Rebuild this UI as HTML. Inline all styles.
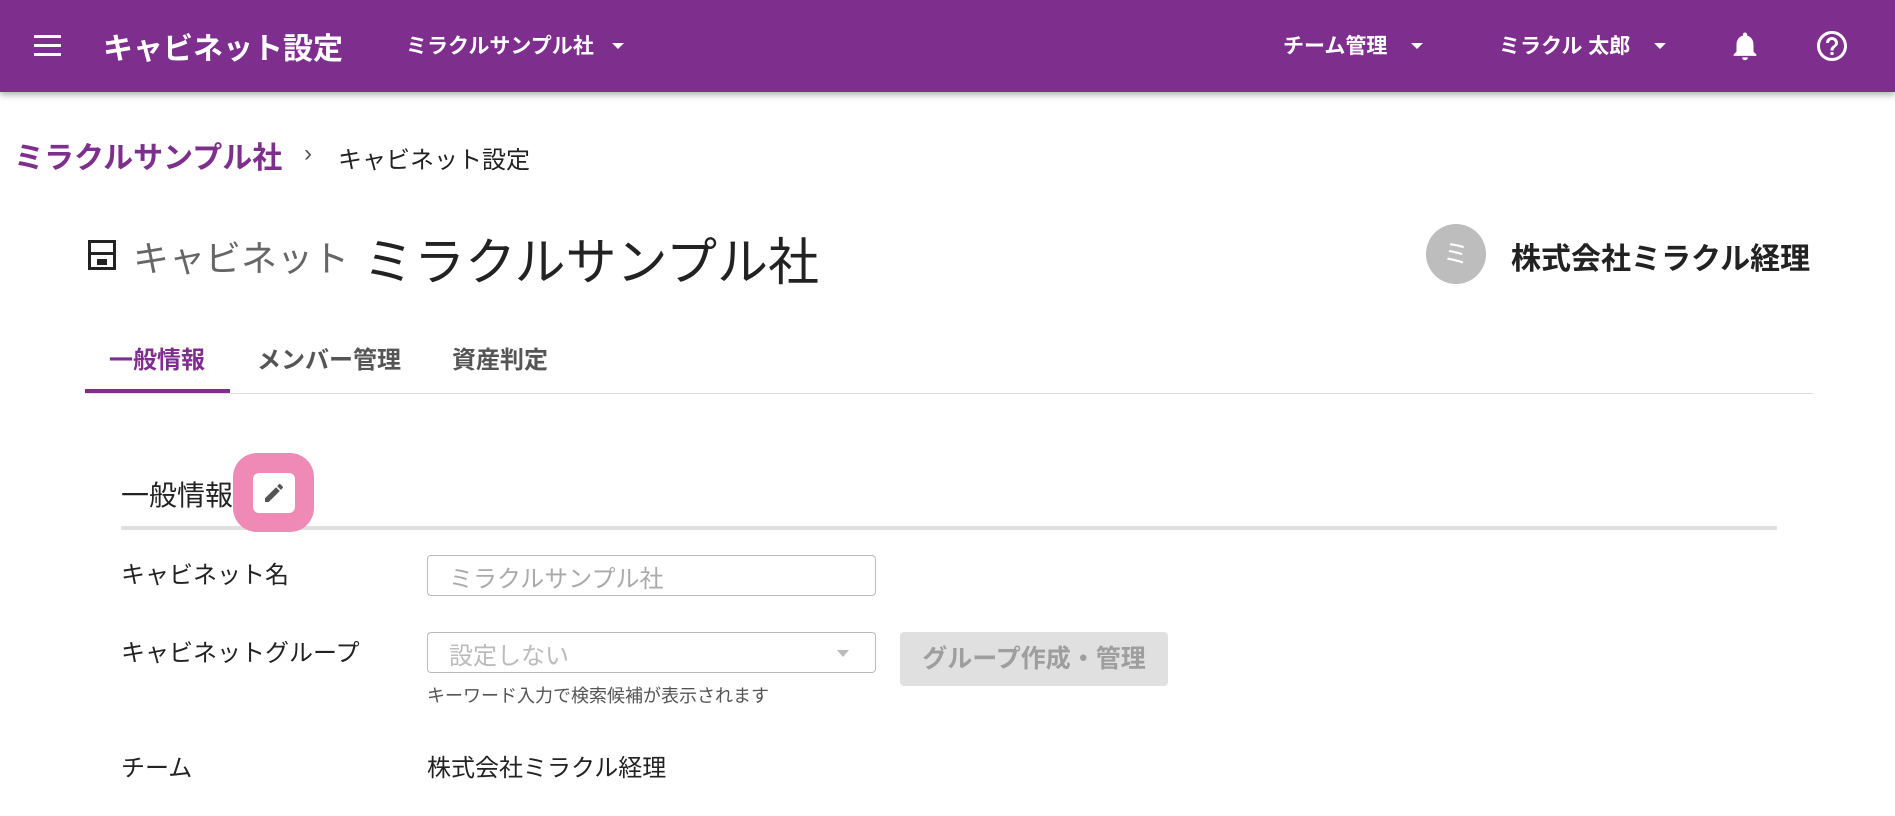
<!DOCTYPE html>
<html><head><meta charset="utf-8"><style>
*{margin:0;padding:0;box-sizing:border-box}
body{width:1895px;height:816px;overflow:hidden;background:#fff;font-family:"Liberation Sans","Noto Sans CJK JP",sans-serif;color:#222;position:relative}
.a{position:absolute;white-space:nowrap}
.hdr{position:absolute;left:0;top:0;width:1895px;height:92px;background:#7e2f8e;box-shadow:0 3px 6px rgba(0,0,0,.3)}
.w{color:#fff;font-weight:bold}
.car{width:0;height:0;border-left:6px solid transparent;border-right:6px solid transparent;border-top:6px solid #fff}
</style></head><body>
<div class="hdr">
<div class="a" style="left:34px;top:35px;width:27px;height:3px;background:#fff;box-shadow:0 9px 0 #fff,0 18px 0 #fff"></div>
<div class="a w" style="left:103px;top:24px;font-size:30px">キャビネット設定</div>
<div class="a w" style="left:406px;top:30px;font-size:21px">ミラクルサンプル社</div>
<div class="a car" style="left:612px;top:43px"></div>
<div class="a w" style="left:1283px;top:30px;font-size:21px">チーム管理</div>
<div class="a car" style="left:1411px;top:43px"></div>
<div class="a w" style="left:1499px;top:30px;font-size:21px">ミラクル 太郎</div>
<div class="a car" style="left:1654px;top:43px"></div>
<svg class="a" style="left:1728px;top:27px" width="34" height="38" viewBox="0 0 24 24"><path fill="#fff" d="M12 22c1.1 0 2-.9 2-2h-4c0 1.1.9 2 2 2zm6-6v-5c0-3.07-1.63-5.64-4.5-6.32V4c0-.83-.67-1.5-1.5-1.5s-1.5.67-1.5 1.5v.68C7.64 5.360 6 7.92 6 11v5l-2 2v1h16v-1l-2-2z"/></svg>
<svg class="a" style="left:1814px;top:28px" width="36" height="36" viewBox="0 0 24 24"><path fill="#fff" d="M11 18h2v-2h-2v2zm1-16C6.48 2 2 6.48 2 12s4.48 10 10 10 10-4.48 10-10S17.52 2 12 2zm0 18c-4.41 0-8-3.59-8-8s3.59-8 8-8 8 3.59 8 8-3.59 8-8 8zm0-14c-2.21 0-4 1.790-4 4h2c0-1.1.9-2 2-2s2 .9 2 2c0 2-3 1.75-3 5h2c0-2.25 3-2.5 3-5 0-2.21-1.79-4-4-4z"/></svg>
</div>
<div class="a" style="left:14px;top:133px;font-size:30px;font-weight:bold;color:#7e2f8e">ミラクルサンプル社</div>
<div class="a" style="left:304px;top:140px;font-size:24px;color:#555">›</div>
<div class="a" style="left:338px;top:140px;font-size:24px;color:#222">キャビネット設定</div>
<svg class="a" style="left:88px;top:240px" width="28" height="30" viewBox="0 0 28 30"><rect x="1.5" y="1.5" width="25" height="27" fill="none" stroke="#222" stroke-width="3"/><rect x="1" y="12" width="26" height="3" fill="#222"/><rect x="9" y="19" width="10" height="6" fill="#222"/></svg>
<div class="a" style="left:133px;top:230px;font-size:36px;color:#666">キャビネット</div>
<div class="a" style="left:363px;top:221px;font-size:51px;color:#222">ミラクルサンプル社</div>
<div class="a" style="left:1426px;top:224px;width:60px;height:60px;border-radius:50%;background:#bdbdbd;color:#fff;font-size:26px;text-align:center;line-height:60px">ミ</div>
<div class="a" style="left:1511px;top:234px;font-size:30px;font-weight:bold;color:#222">株式会社ミラクル経理</div>
<div class="a" style="left:109px;top:340px;font-size:24px;font-weight:bold;color:#7e2f8e">一般情報</div>
<div class="a" style="left:257px;top:340px;font-size:24px;font-weight:bold;color:#555">メンバー管理</div>
<div class="a" style="left:452px;top:340px;font-size:24px;font-weight:bold;color:#555">資産判定</div>
<div class="a" style="left:85px;top:393px;width:1728px;height:1px;background:#ddd"></div>
<div class="a" style="left:85px;top:389px;width:145px;height:4px;background:#7e2f8e"></div>
<div class="a" style="left:121px;top:474px;font-size:28px;color:#222">一般情報</div>
<div class="a" style="left:121px;top:526px;width:1656px;height:4px;background:#e0e0e0"></div>
<div class="a" style="left:233px;top:453px;width:81px;height:79px;border-radius:24px;background:#ef8ab6"></div>
<div class="a" style="left:253px;top:473px;width:42px;height:40px;border-radius:6px;background:#fff"></div>
<svg class="a" style="left:262px;top:481px" width="24" height="24" viewBox="0 0 24 24"><path fill="#555" d="M3 17.25V21h3.75L17.81 9.94l-3.75-3.75L3 17.25zM20.71 7.04c.39-.39.39-1.02 0-1.41l-2.34-2.34a.9959.9959 0 0 0-1.41 0l-1.83 1.83 3.75 3.75 1.83-1.830z"/></svg>
<div class="a" style="left:121px;top:555px;font-size:24px">キャビネット名</div>
<div class="a" style="left:427px;top:555px;width:449px;height:41px;border:1px solid #bbb;border-radius:4px"></div>
<div class="a" style="left:449px;top:559px;font-size:24px;color:#aaa">ミラクルサンプル社</div>
<div class="a" style="left:121px;top:633px;font-size:24px">キャビネットグループ</div>
<div class="a" style="left:427px;top:632px;width:449px;height:41px;border:1px solid #bbb;border-radius:4px"></div>
<div class="a" style="left:449px;top:636px;font-size:24px;color:#bbb">設定しない</div>
<div class="a" style="left:837px;top:650px;width:0;height:0;border-left:6px solid transparent;border-right:6px solid transparent;border-top:7px solid #bbb"></div>
<div class="a" style="left:427px;top:682px;font-size:18px;color:#555">キーワード入力で検索候補が表示されます</div>
<div class="a" style="left:900px;top:632px;width:268px;height:54px;border-radius:4px;background:#e0e0e0;color:#9e9e9e;font-size:25px;font-weight:bold;text-align:center;line-height:54px">グループ作成・管理</div>
<div class="a" style="left:121px;top:748px;font-size:24px">チーム</div>
<div class="a" style="left:427px;top:748px;font-size:24px">株式会社ミラクル経理</div>
</body></html>
